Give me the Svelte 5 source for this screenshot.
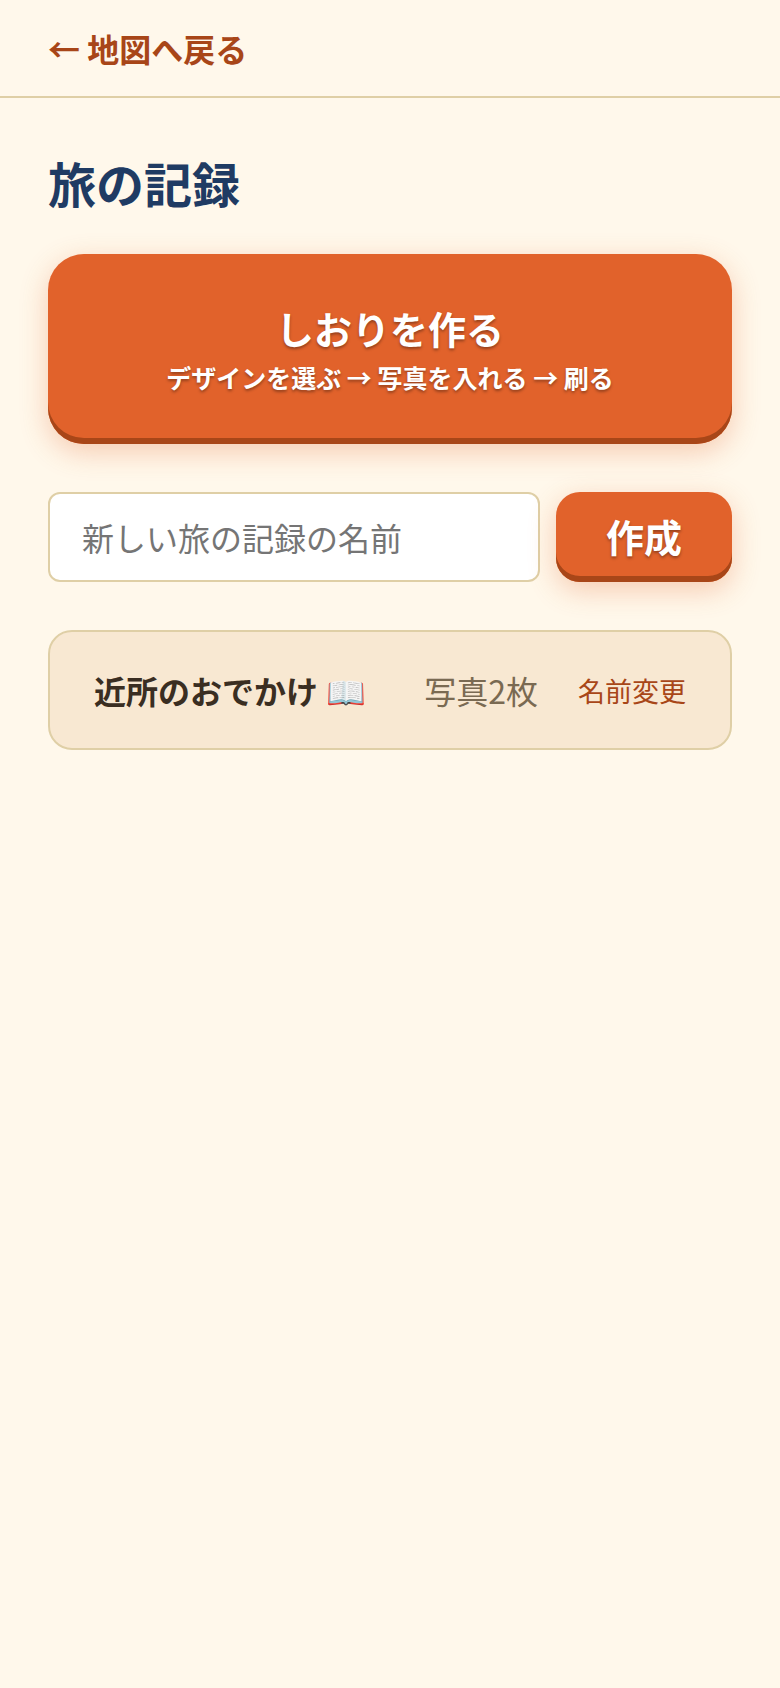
<script>
  let name = $state('');
  let trips = $state([{ id: 1, title: '近所のおでかけ', photos: 2 }]);

  function create(event) {
    event.preventDefault();
    const title = name.trim();
    if (!title) return;
    trips.push({ id: trips.length + 1, title, photos: 0 });
    name = '';
  }
</script>

<header>
  <a class="back" href="#map">← 地図へ戻る</a>
</header>

<main>
  <h1>旅の記録</h1>

  <button class="primary hero" type="button">
    <span class="lead">しおりを作る</span>
    <span class="steps">デザインを選ぶ → 写真を入れる → 刷る</span>
  </button>

  <form onsubmit={create}>
    <input type="text" placeholder="新しい旅の記録の名前" aria-label="新しい旅の記録の名前" bind:value={name} />
    <button class="primary submit" type="submit">作成</button>
  </form>

  <ul>
    {#each trips as trip (trip.id)}
      <li>
        <a class="title" href="#trip-{trip.id}"><span>{trip.title}</span><span>📖</span></a>
        <span class="count">写真{trip.photos}枚</span>
        <button class="rename" type="button">名前変更</button>
      </li>
    {/each}
  </ul>
</main>

<style>
  :global(body) {
    background: #fff8eb;
    color: #3a2e22;
    font-family: "Noto Sans CJK JP", "Noto Color Emoji", sans-serif;
    font-size: 32px;
    line-height: 48px;
  }

  header {
    padding: 24px 48px;
    border-bottom: 2px solid #dfcfa6;
  }

  a {
    text-decoration: none;
  }

  .back {
    display: block;
    color: #a84618;
    font-weight: 700;
  }

  main {
    padding: 48px;
  }

  h1 {
    margin: 0 0 36px;
    color: #1f3b63;
    font-size: 48px;
    line-height: 72px;
    font-weight: 700;
  }

  button,
  input {
    box-sizing: border-box;
    margin: 0;
    font: inherit;
  }

  button {
    border: 0;
    cursor: pointer;
  }

  .primary {
    background: #e1622b;
    color: #fff;
    font-size: 38px;
    font-weight: 700;
    text-shadow: 0 2px 3px rgb(0 0 0 / 35%);
    box-shadow:
      inset 0 -6px 0 #a84618,
      0 8px 28px rgb(224 98 43 / 30%);
  }

  .hero {
    display: flex;
    flex-direction: column;
    align-items: center;
    gap: 4px;
    width: 100%;
    padding: 48px 32px;
    border-radius: 36px;
  }

  .lead {
    line-height: 52px;
  }

  .steps {
    font-size: 25px;
    line-height: 38px;
  }

  form {
    display: flex;
    gap: 16px;
    margin: 48px 0;
  }

  input {
    flex: 1;
    min-width: 0;
    padding: 19px 32px;
    border: 2px solid #dfcfa6;
    border-radius: 12px;
    background: #fff;
    color: inherit;
    line-height: 48px;
  }

  input::placeholder {
    color: #757575;
    opacity: 1;
  }

  .submit {
    padding: 0 50px 2px;
    border-radius: 24px;
  }

  ul {
    margin: 0;
    padding: 0;
    list-style: none;
  }

  li {
    display: flex;
    align-items: center;
    padding: 34px 44px;
    border: 2px solid #dfcfa6;
    border-radius: 24px;
    background: #f8e8d2;
  }

  li + li {
    margin-top: 24px;
  }

  .title {
    display: flex;
    flex: 1;
    gap: 8px;
    color: inherit;
    font-weight: 700;
  }

  .count {
    color: #7a6a52;
  }

  .rename {
    margin-left: 24px;
    padding: 2px 0 0 16px;
    background: none;
    color: #a84618;
    font-size: 27px;
    line-height: 40px;
  }
</style>
